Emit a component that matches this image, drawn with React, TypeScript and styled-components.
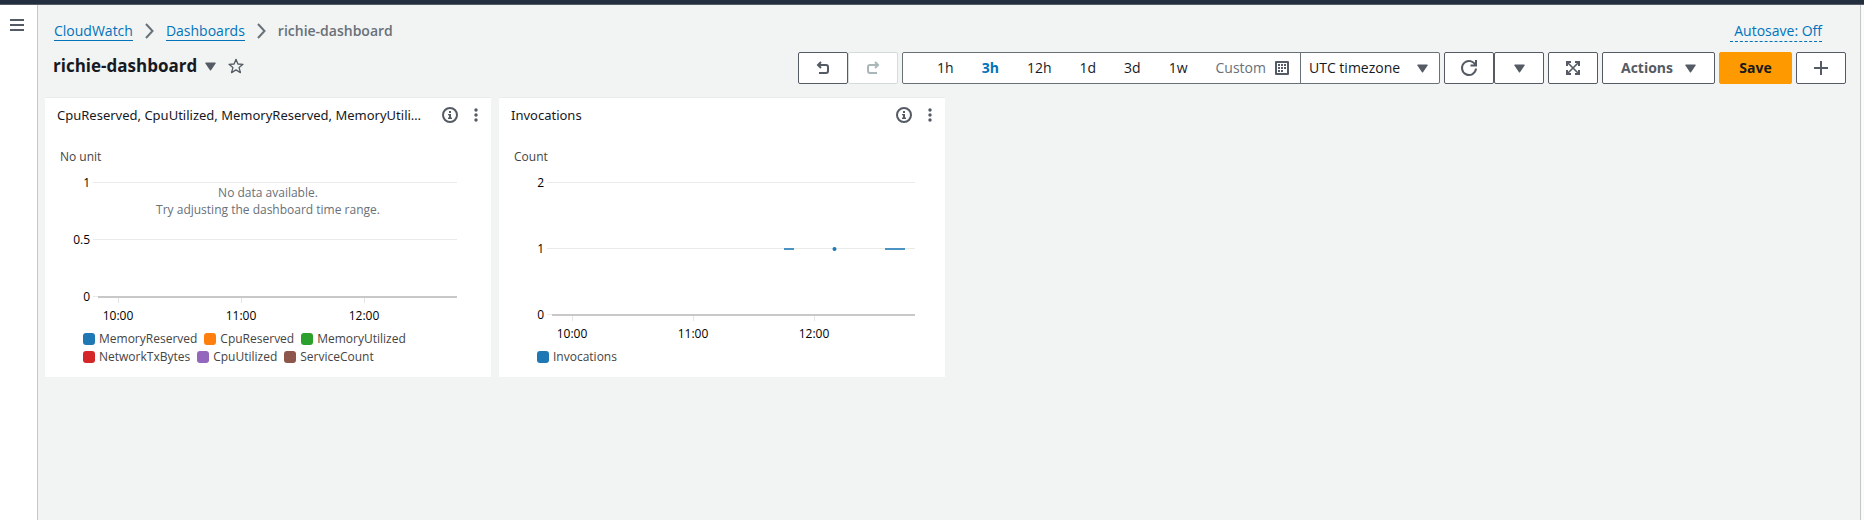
import React from 'react';
import styled, { createGlobalStyle } from 'styled-components';

const slate = '#545b64';
const blue = '#0073bb';

const GlobalStyle = createGlobalStyle`
  * { box-sizing: border-box; }
  body {
    margin: 0;
    background: #f2f3f3;
    color: #16191f;
    font: 14px/22px "Open Sans", "Noto Sans", sans-serif;
  }
  button, select { font: inherit; color: inherit; }
  svg { display: block; flex: none; }
`;

const Shell = styled.div`
  display: grid;
  grid-template-columns: 38px 1fr 4px;
  grid-template-rows: 5px 1fr;
  min-height: 100vh;
`;

const TopBar = styled.div`
  grid-column: 1 / -1;
  background: #232f3e;
  border-bottom: 1px solid ${slate};
`;

const Rail = styled.nav`
  background: #fff;
  border-right: 1px solid #c3c7c8;
  padding: 14px 10px;
`;

const RightRail = styled.aside`
  background: #fafafa;
  border-left: 1px solid #c3c7c8;
`;

const IconButton = styled.button`
  display: flex;
  align-items: center;
  justify-content: center;
  padding: 0;
  border: 0;
  background: none;
  color: ${slate};
  cursor: pointer;
`;

const Main = styled.main`
  padding: 15px 7px;
  min-width: 0;
`;

const TopRow = styled.div`
  display: flex;
  justify-content: space-between;
  align-items: center;
  height: 22px;
  padding: 0 31px 0 9px;
`;

const Crumbs = styled.ol`
  display: flex;
  align-items: center;
  gap: 12px;
  margin: 0;
  padding: 0;
  list-style: none;
`;

const Crumb = styled.li`
  display: flex;
  align-items: center;
  gap: 12px;
  color: ${slate};
`;

const CrumbLink = styled.a`
  color: ${blue};
  text-decoration: none;
  line-height: 18px;
  border-bottom: 1px solid ${blue};
`;

const CurrentCrumb = styled.span`
  color: #687078;
  font-weight: 600;
`;

const Autosave = styled.a`
  padding-left: 4px;
  color: ${blue};
  line-height: 20px;
  text-decoration: none;
  border-bottom: 1px dashed ${blue};
`;

const HeaderRow = styled.div`
  display: flex;
  justify-content: space-between;
  align-items: center;
  margin: 10px 7px 14px;
  height: 32px;
`;

const TitleGroup = styled.div`
  display: flex;
  align-items: center;
  padding: 0 0 4px 1px;
`;

const Title = styled.h1`
  margin: 0 8px 0 0;
  font-size: 17px;
  line-height: 24px;
  font-weight: 700;
`;

const FavoriteButton = styled(IconButton)`
  margin-left: 12px;
`;

const Toolbar = styled.div`
  display: flex;
  gap: 4px;
`;

const Joined = styled.div`
  display: flex;
`;

const ToolButton = styled.button<{ $wide?: number; $primary?: boolean }>`
  display: flex;
  align-items: center;
  justify-content: center;
  gap: 12px;
  width: ${p => p.$wide ?? 50}px;
  height: 32px;
  padding: 0;
  border: 1px solid ${p => (p.$primary ? '#ff9900' : slate)};
  border-radius: 2px;
  background: ${p => (p.$primary ? '#ff9900' : '#fff')};
  color: ${p => (p.$primary ? '#16191f' : slate)};
  font-weight: 700;
  cursor: pointer;

  &:disabled {
    border-color: #d5dbdb;
    color: #aab7b8;
    cursor: default;
  }
`;

const RangeGroup = styled.div`
  display: flex;
  height: 32px;
  border: 1px solid #687078;
  border-radius: 2px;
  background: #fff;
`;

const Ranges = styled.div`
  display: flex;
  padding: 0 11px 0 20px;
  border-right: 1px solid #687078;
`;

const RangeButton = styled.button<{ $active?: boolean }>`
  display: flex;
  align-items: center;
  padding: 0 14px;
  border: 0;
  background: none;
  color: ${p => (p.$active ? blue : 'inherit')};
  font-weight: ${p => (p.$active ? 700 : 400)};
  cursor: pointer;
`;

const CustomButton = styled(RangeButton)`
  gap: 9px;
  padding-right: 0;
  color: #687078;
`;

const ZoneField = styled.label`
  display: flex;
  position: relative;
  align-items: center;
`;

const ZoneSelect = styled.select`
  appearance: none;
  width: 138px;
  height: 30px;
  padding: 0 34px 0 8px;
  border: 0;
  background: none;
`;

const ZoneArrow = styled.span`
  position: absolute;
  right: 11px;
  color: ${slate};
  pointer-events: none;
`;

const Widgets = styled.div`
  display: grid;
  grid-template-columns: repeat(4, minmax(0, 1fr));
  gap: 8px;
`;

const Card = styled.section`
  background: #fff;
  box-shadow: 0 -1px 0 #eaeded;
  padding-bottom: 11px;
`;

const CardHeader = styled.header`
  display: flex;
  align-items: center;
  height: 34px;
  padding: 0 13px 0 12px;
`;

const CardTitle = styled.h2`
  flex: 1;
  min-width: 0;
  margin: 0;
  overflow: hidden;
  font-family: "Noto Sans", "Open Sans", sans-serif;
  font-size: 13px;
  line-height: 22px;
  font-weight: 400;
  text-overflow: ellipsis;
  white-space: nowrap;
`;

const CardActions = styled.div`
  display: flex;
  align-items: center;
  gap: 16px;
  padding-left: 3px;
`;

const ChartSvg = styled.svg`
  width: 100%;
  height: auto;
  font-size: 12px;
`;

const Legend = styled.ul`
  display: flex;
  flex-wrap: wrap;
  column-gap: 7px;
  margin: 0;
  padding: 0 34px 0 38px;
  list-style: none;
`;

const LegendItem = styled.li`
  display: flex;
  align-items: center;
  gap: 4px;
  color: #444;
  font-size: 12px;
  line-height: 18px;
`;

const Swatch = styled.span<{ $color: string }>`
  width: 12px;
  height: 12px;
  border-radius: 3px;
  background: ${p => p.$color};
`;

const Triangle = () => (
  <svg width="11" height="9" viewBox="0 0 11 9" fill="currentColor" aria-hidden="true">
    <path d="M1 .5h9q1 0 .6.900L6.200 8q-.7 1-1.400 0L.4 1.400Q0 .5 1 .5z" />
  </svg>
);

const Chevron = () => (
  <svg width="9" height="16" viewBox="0 0 9 16" fill="none" stroke="#687078" strokeWidth="2" aria-hidden="true">
    <path d="M1 1l6.500 7L1 15" />
  </svg>
);

const Star = () => (
  <svg width="16" height="16" viewBox="0 0 16 16" fill="none" stroke="currentColor" strokeWidth="1.300" strokeLinejoin="round" aria-hidden="true">
    <path d="M8 1.300l1.900 4.700 5.100.3-3.900 3.300 1.300 5L8 11.900l-4.400 2.700 1.300-5L1 6.300 6.100 6z" />
  </svg>
);

const MenuIcon = () => (
  <svg width="14" height="12" viewBox="0 0 14 12" fill="currentColor" aria-hidden="true">
    <path d="M0 0h14v2H0zM0 5h14v2H0zM0 10h14v2H0z" />
  </svg>
);

const UndoIcon = ({ flip }: { flip?: boolean }) => (
  <svg width="14" height="14" viewBox="0 0 14 14" fill="none" stroke="currentColor" strokeWidth="2" aria-hidden="true">
    <g transform={flip ? 'matrix(-1 0 0 1 14 0)' : undefined}>
      <path d="M2 4H10Q12 4 12 6V10Q12 12 10 12H3" />
      <path d="M5 1L2 4 5 7" />
    </g>
  </svg>
);

const CalendarIcon = () => (
  <svg width="14" height="14" viewBox="0 0 14 14" aria-hidden="true">
    <rect width="14" height="14" rx="1" fill={slate} />
    <rect x="2" y="2" width="10" height="10" fill="#fff" />
    <path
      fill={slate}
      d="M6 3h2v2H6zM9 3h2v2H9zM3 6h2v2H3zM6 6h2v2H6zM9 6h2v2H9zM3 9h2v2H3zM6 9h2v2H6zM3 3h2v2H3z"
    />
  </svg>
);

const RefreshIcon = () => (
  <svg width="18" height="18" viewBox="0 0 18 18" fill="none" stroke="currentColor" strokeWidth="2" aria-hidden="true">
    <path d="M15.500 6.300A7 7 0 1 0 16 9.500" />
    <path d="M16 1v5.500h-5.500" />
  </svg>
);

const ExpandIcon = () => (
  <svg width="14" height="14" viewBox="0 0 14 14" fill="none" stroke="currentColor" strokeWidth="2" aria-hidden="true">
    <path d="M1 5V1h4M9 1h4v4M13 9v4H9M5 13H1V9" />
    <path strokeWidth="1.600" d="M1.500 1.500l11 11M12.500 1.500l-11 11" />
  </svg>
);

const PlusIcon = () => (
  <svg width="14" height="14" viewBox="0 0 14 14" fill="currentColor" aria-hidden="true">
    <path d="M6 0h2v6h6v2H8v6H6V8H0V6h6z" />
  </svg>
);

const InfoIcon = () => (
  <svg width="16" height="16" viewBox="0 0 16 16" fill="none" stroke="currentColor" strokeWidth="2" aria-hidden="true">
    <circle cx="8" cy="8" r="7" />
    <path fill="currentColor" stroke="none" d="M7 4h2v2H7zM6 7h3v3.500h1V12H6v-1.500h1V8.300H6z" />
  </svg>
);

const DotsIcon = () => (
  <svg width="4" height="14" viewBox="0 0 4 14" fill="currentColor" aria-hidden="true">
    <circle cx="2" cy="2" r="1.700" />
    <circle cx="2" cy="7" r="1.700" />
    <circle cx="2" cy="12" r="1.700" />
  </svg>
);

type Tick = { at: number; label: string };

type ChartProps = {
  label: string;
  height: number;
  right: number;
  unit: string;
  yTicks: Tick[];
  xTicks: Tick[];
  children?: React.ReactNode;
};

const Chart = ({ label, height, right, unit, yTicks, xTicks, children }: ChartProps) => {
  const base = yTicks[yTicks.length - 1].at;
  return (
    <ChartSvg viewBox={`0 0 446 ${height}`} role="img" aria-label={label}>
      <text x="15" y="29" fill="#444">{unit}</text>
      {yTicks.map(t => (
        <g key={t.label}>
          <rect x="48" y={t.at} width={right - 48} height="1" fill="#eaeaea" />
          <text x="45" y={t.at + 5} textAnchor="end">{t.label}</text>
        </g>
      ))}
      {xTicks.map(t => (
        <g key={t.label}>
          <rect x={t.at} y={base + 2} width="1" height="5" fill="#e4e4e4" />
          <text x={t.at} y={base + 24} textAnchor="middle">{t.label}</text>
        </g>
      ))}
      <rect x="53" y={base} width={right - 53} height="2" fill="#c8c8c8" />
      {children}
    </ChartSvg>
  );
};

type WidgetProps = {
  title: string;
  legend: [string, string][];
  children: React.ReactNode;
};

const Widget = ({ title, legend, children }: WidgetProps) => (
  <Card>
    <CardHeader>
      <CardTitle>{title}</CardTitle>
      <CardActions>
        <IconButton aria-label="Widget details"><InfoIcon /></IconButton>
        <IconButton aria-label="Widget actions"><DotsIcon /></IconButton>
      </CardActions>
    </CardHeader>
    {children}
    <Legend>
      {legend.map(([name, color]) => (
        <LegendItem key={name}>
          <Swatch $color={color} />
          {name}
        </LegendItem>
      ))}
    </Legend>
  </Card>
);

const ranges = ['1h', '3h', '12h', '1d', '3d', '1w'];

export default function App() {
  return (
    <>
      <GlobalStyle />
      <Shell>
        <TopBar />
        <Rail aria-label="Service navigation">
          <IconButton aria-label="Open navigation"><MenuIcon /></IconButton>
        </Rail>
        <Main>
          <TopRow>
            <nav aria-label="Breadcrumbs">
              <Crumbs>
                <Crumb><CrumbLink href="#cloudwatch">CloudWatch</CrumbLink><Chevron /></Crumb>
                <Crumb><CrumbLink href="#dashboards">Dashboards</CrumbLink><Chevron /></Crumb>
                <Crumb><CurrentCrumb aria-current="page">richie-dashboard</CurrentCrumb></Crumb>
              </Crumbs>
            </nav>
            <Autosave href="#autosave">Autosave: Off</Autosave>
          </TopRow>
          <HeaderRow>
            <TitleGroup>
              <Title>richie-dashboard</Title>
              <IconButton aria-label="Switch dashboard"><Triangle /></IconButton>
              <FavoriteButton aria-label="Add to favorites"><Star /></FavoriteButton>
            </TitleGroup>
            <Toolbar>
              <Joined>
                <ToolButton aria-label="Undo"><UndoIcon /></ToolButton>
                <ToolButton aria-label="Redo" disabled><UndoIcon flip /></ToolButton>
              </Joined>
              <RangeGroup>
                <Ranges>
                  {ranges.map(r => (
                    <RangeButton key={r} $active={r === '3h'} aria-pressed={r === '3h'}>{r}</RangeButton>
                  ))}
                  <CustomButton>Custom<CalendarIcon /></CustomButton>
                </Ranges>
                <ZoneField>
                  <ZoneSelect aria-label="Timezone" defaultValue="utc">
                    <option value="utc">UTC timezone</option>
                    <option value="local">Local timezone</option>
                  </ZoneSelect>
                  <ZoneArrow><Triangle /></ZoneArrow>
                </ZoneField>
              </RangeGroup>
              <Joined>
                <ToolButton aria-label="Refresh"><RefreshIcon /></ToolButton>
                <ToolButton aria-label="Refresh options"><Triangle /></ToolButton>
              </Joined>
              <ToolButton aria-label="Full screen"><ExpandIcon /></ToolButton>
              <ToolButton $wide={113}>Actions<Triangle /></ToolButton>
              <ToolButton $wide={73} $primary>Save</ToolButton>
              <ToolButton aria-label="Add widget"><PlusIcon /></ToolButton>
            </Toolbar>
          </HeaderRow>
          <Widgets>
            <Widget
              title="CpuReserved, CpuUtilized, MemoryReserved, MemoryUtili…"
              legend={[
                ['MemoryReserved', '#1f77b4'],
                ['CpuReserved', '#ff7f0e'],
                ['MemoryUtilized', '#2ca02c'],
                ['NetworkTxBytes', '#d62728'],
                ['CpuUtilized', '#9467bd'],
                ['ServiceCount', '#8c564b'],
              ]}
            >
              <Chart
                label="Container metrics"
                height={198}
                right={412}
                unit="No unit"
                yTicks={[{ at: 50, label: '1' }, { at: 107, label: '0.5' }, { at: 164, label: '0' }]}
                xTicks={[{ at: 73, label: '10:00' }, { at: 196, label: '11:00' }, { at: 319, label: '12:00' }]}
              >
                <text x="223" y="65" textAnchor="middle" fill="#687078">No data available.</text>
                <text x="223" y="82" textAnchor="middle" fill="#687078">Try adjusting the dashboard time range.</text>
              </Chart>
            </Widget>
            <Widget title="Invocations" legend={[['Invocations', '#1f77b4']]}>
              <Chart
                label="Invocations"
                height={216}
                right={416}
                unit="Count"
                yTicks={[{ at: 50, label: '2' }, { at: 116, label: '1' }, { at: 182, label: '0' }]}
                xTicks={[{ at: 73, label: '10:00' }, { at: 194, label: '11:00' }, { at: 315, label: '12:00' }]}
              >
                <rect x="285" y="116" width="10" height="2" fill="#4c92c3" />
                <circle cx="335.500" cy="117" r="2" fill="#1f77b4" />
                <rect x="386" y="116" width="20" height="2" fill="#4c92c3" />
              </Chart>
            </Widget>
          </Widgets>
        </Main>
        <RightRail />
      </Shell>
    </>
  );
}
